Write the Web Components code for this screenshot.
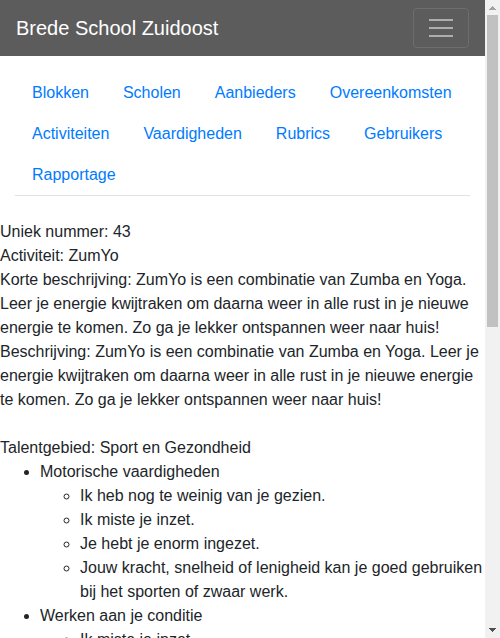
<!DOCTYPE html>
<html lang="nl">
<head>
<meta charset="utf-8">
<meta name="viewport" content="width=device-width, initial-scale=1">
<title>Brede School Zuidoost</title>
<style>
  body { margin: 0; font: 16px/24px "Liberation Sans", Arial, sans-serif; color: #212529; background: #fff; }
</style>
</head>
<body>
<app-shell>
  <site-header>Brede School Zuidoost</site-header>
  <tab-nav>
    <tab-link>Blokken</tab-link>
    <tab-link>Scholen</tab-link>
    <tab-link>Aanbieders</tab-link>
    <tab-link>Overeenkomsten</tab-link>
    <tab-link>Activiteiten</tab-link>
    <tab-link>Vaardigheden</tab-link>
    <tab-link>Rubrics</tab-link>
    <tab-link>Gebruikers</tab-link>
    <tab-link>Rapportage</tab-link>
  </tab-nav>
  <activity-detail></activity-detail>
</app-shell>

<script>
class BaseElement extends HTMLElement {
  constructor() {
    super();
    this.attachShadow({ mode: 'open' }).innerHTML = this.constructor.markup;
  }
}

customElements.define('app-shell', class extends BaseElement {
  static markup = `
    <style>
      :host { display: grid; grid-template-columns: minmax(0, 1fr) auto; height: 100vh; overflow: hidden; }
      main { min-height: 0; overflow: hidden; background: #fff; }
    </style>
    <main><slot></slot></main>
    <scroll-rail aria-hidden="true"></scroll-rail>`;
});

customElements.define('scroll-rail', class extends BaseElement {
  static markup = `
    <style>
      :host { display: flex; flex-direction: column; width: 15px; background: #f1f1f1; }
      svg { display: block; flex: none; width: 15px; height: 15px; }
      .track { flex: 1; display: grid; grid-template-rows: 312fr 296fr; padding: 0 2px; }
      .thumb { background: #c1c1c1; }
    </style>
    <svg viewBox="0 0 15 15" shape-rendering="crispEdges"><path fill="#a3a3a3" d="M7 6h1v1h1v1h1v1h1v1H4V9h1V8h1V7h1z"/></svg>
    <div class="track"><div class="thumb"></div></div>
    <svg viewBox="0 0 15 15" shape-rendering="crispEdges"><path fill="#505050" d="M4 5h7v1h-1v1H9v1H8v1H7V8H6V7H5V6H4z"/></svg>`;
});

customElements.define('site-header', class extends BaseElement {
  static markup = `
    <style>
      :host { display: flex; align-items: center; justify-content: space-between; padding: 8px 16px; background: #5c5c5c; }
      a { color: #fff; font-size: 20px; line-height: 30px; text-decoration: none; white-space: nowrap; }
      button { display: block; padding: 4px 12px; border: 1px solid rgba(255,255,255,.1); border-radius: 4px; background: transparent; }
      svg { display: block; width: 30px; height: 30px; }
    </style>
    <a href="#"><slot></slot></a>
    <button type="button" aria-label="Menu">
      <svg viewBox="0 0 30 30"><path stroke="rgba(255,255,255,.5)" stroke-width="2" stroke-linecap="butt" stroke-miterlimit="10" d="M3 7h24M3 15h24M3 23h24"/></svg>
    </button>`;
});

customElements.define('tab-nav', class extends BaseElement {
  static markup = `
    <style>
      :host { display: block; padding: 16px 15px 24px; }
      nav { display: flex; flex-wrap: wrap; border-bottom: 1px solid #dee2e6; }
    </style>
    <nav><slot></slot></nav>`;
});

customElements.define('tab-link', class extends BaseElement {
  static markup = `
    <style>
      :host { display: block; margin-bottom: -1px; }
      a { display: block; padding: 8px 16px; border: 1px solid transparent; color: #007bff; text-decoration: none; }
    </style>
    <a href="#"><slot></slot></a>`;
});

customElements.define('activity-detail', class extends BaseElement {
  static markup = `
    <style>
      :host { display: block; }
      p { margin: 0; }
      .area { margin-top: 24px; }
      ul { margin: 0; padding-left: 40px; list-style: disc; }
      ul ul { list-style: circle; }
    </style>
    <p>Uniek nummer: 43</p>
    <p>Activiteit: ZumYo</p>
    <p>Korte beschrijving: ZumYo is een combinatie van Zumba en Yoga. Leer je energie kwijtraken om daarna weer in alle rust in je nieuwe energie te komen. Zo ga je lekker ontspannen weer naar huis!</p>
    <p>Beschrijving: ZumYo is een combinatie van Zumba en Yoga. Leer je energie kwijtraken om daarna weer in alle rust in je nieuwe energie te komen. Zo ga je lekker ontspannen weer naar huis!</p>
    <p class="area">Talentgebied: Sport en Gezondheid</p>
    <ul>
      <li>Motorische vaardigheden
        <ul>
          <li>Ik heb nog te weinig van je gezien.</li>
          <li>Ik miste je inzet.</li>
          <li>Je hebt je enorm ingezet.</li>
          <li>Jouw kracht, snelheid of lenigheid kan je goed gebruiken bij het sporten of zwaar werk.</li>
        </ul>
      </li>
      <li>Werken aan je conditie
        <ul>
          <li>Ik miste je inzet.</li>
        </ul>
      </li>
    </ul>`;
});
</script>
</body>
</html>
